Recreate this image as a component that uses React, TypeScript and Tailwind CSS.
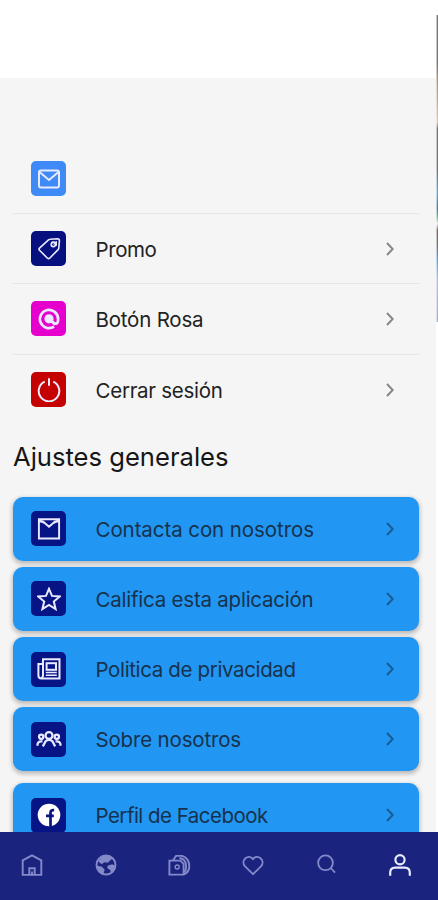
import type { ReactNode } from 'react';

interface Item {
  label: string;
  icon: ReactNode;
  color: string;
  tracking?: string;
}

function Icon({ children, size = 24, stroke = 2 }: { children: ReactNode; size?: number; stroke?: number }) {
  return (
    <svg
      width={size}
      height={size}
      viewBox="0 0 24 24"
      fill="none"
      stroke="currentColor"
      strokeWidth={stroke}
      className="shrink-0"
    >
      {children}
    </svg>
  );
}

const account: Item[] = [
  {
    label: '',
    color: 'bg-[#3e8af7]',
    icon: (
      <Icon stroke={2}>
        <rect x="2" y="3.6" width="20" height="16.8" rx="2" />
        <path d="M2.8 5.2 12 13l9.2-7.8" />
      </Icon>
    ),
  },
  {
    label: 'Promo',
    color: 'bg-[#06117f]',
    tracking: 'tracking-[-0.4px]',
    icon: (
      <Icon stroke={1.6}>
        <path d="M13.2 2.3 20.6 1.8q1.8 0 1.8 1.8l-.6 7.6q-.1.8-.7 1.4l-8.4 8.6q-1.1 1-2.2 0l-8-7.9q-1-1.1 0-2.2l9-8.2q.8-.6 1.7-.6Z" />
        <circle cx="16.3" cy="7.5" r="2.1" />
        <path d="M16.5 7.5 20 4.4M14.5 5h5v3.8" strokeWidth="1" />
      </Icon>
    ),
  },
  {
    label: 'Botón Rosa',
    color: 'bg-[#e600ce]',
    tracking: 'tracking-[-0.2px]',
    icon: (
      <Icon stroke={2.7}>
        <path d="M17 19.6A9.1 9.1 0 1 1 21.1 12.3c0 2.7-1 4.4-2.4 4.4-1 0-1.8-.7-3.4-2.2" />
        <circle cx="12" cy="11.8" r="4.6" fill="currentColor" stroke="none" />
        <path d="m13.5 13.5 4.5 4.4" strokeWidth="2.4" />
      </Icon>
    ),
  },
  {
    label: 'Cerrar sesión',
    color: 'bg-[#c50000]',
    tracking: 'tracking-[-0.27px]',
    icon: (
      <Icon stroke={2}>
        <path d="M7.8 3.7a10.3 10.3 0 1 0 8.4 0M12 .3v7.5" />
      </Icon>
    ),
  },
];

const general: Item[] = [
  {
    label: 'Contacta con nosotros',
    color: 'bg-[#071486]',
    tracking: 'tracking-[-0.08px]',
    icon: (
      <Icon stroke={1.9}>
        <path d="M1.9 2.3h20.2v19.2H1.9Z" />
        <path d="M2 4.5h4l6 5.2 6-5.2h4" />
        <path d="M2.5 3 7 6M21.5 3 17 6" />
      </Icon>
    ),
  },
  {
    label: 'Califica esta aplicación',
    color: 'bg-[#071486]',
    tracking: 'tracking-[-0.23px]',
    icon: (
      <Icon stroke={2}>
        <path d="m12 1.8 3 7.1 7.7.6-5.9 5 1.8 7.6-6.6-4.1-6.6 4.1 1.8-7.6-5.9-5L9 8.9Z" />
      </Icon>
    ),
  },
  {
    label: 'Politica de privacidad',
    color: 'bg-[#071486]',
    tracking: 'tracking-[-0.36px]',
    icon: (
      <Icon stroke={2}>
        <path d="M6 2.2h16.5v19.2H4.4q-3 0-3-3V7H6Z" />
        <path d="M6 7v11q0 3-2 3.2" />
        <rect x="9.6" y="6.2" width="9.4" height="6.6" />
        <path d="M8.8 15.5h11M8.8 18.3h11" strokeWidth="1.5" />
      </Icon>
    ),
  },
  {
    label: 'Sobre nosotros',
    color: 'bg-[#071486]',
    tracking: 'tracking-[-0.17px]',
    icon: (
      <Icon size={26} stroke={2.1}>
        <circle cx="12" cy="8.8" r="3.2" />
        <path d="M6.3 18.8 9 13.9q3-2.2 6 0l2.7 4.9" />
        <circle cx="4.8" cy="10" r="2" />
        <circle cx="19.2" cy="10" r="2" />
        <path d="M1.3 18.2c0-3 1.5-4.5 4.7-4M22.7 18.2c0-3-1.5-4.5-4.7-4" />
      </Icon>
    ),
  },
];

const facebook: Item = {
  label: 'Perfil de Facebook',
  color: 'bg-[#071486]',
  tracking: 'tracking-[-0.53px]',
  icon: (
    <Icon>
      <circle cx="12" cy="12" r="11.3" fill="white" stroke="none" />
      <path d="M13.5 23.5V9.7c0-2 1.2-2.8 3.6-2.5M9 12.8h7.8" stroke="#071486" strokeWidth="2.7" />
    </Icon>
  ),
};

function Row({ item, dark }: { item: Item; dark?: boolean }) {
  return (
    <>
      <span className={`flex size-[35px] shrink-0 items-center justify-center rounded-[5px] text-[#e9eaff] ${item.color}`}>
        {item.icon}
      </span>
      <span className={`ml-[29.5px] flex-1 whitespace-nowrap pt-0.5 text-[20.5px] leading-7 ${item.tracking ?? ''} ${dark ? 'text-[#17324d]' : 'text-[#222]'}`}>
        {item.label}
      </span>
      {item.label && (
        <svg
          width="8"
          height="14"
          viewBox="0 0 8 14"
          fill="none"
          stroke="currentColor"
          strokeWidth="1.9"
          className={dark ? 'text-[#175b91]' : 'text-[#858585]'}
        >
          <path d="m1 1 5.7 6L1 13" />
        </svg>
      )}
    </>
  );
}

function Card({ item }: { item: Item }) {
  return (
    <button className="flex h-16 w-full shrink-0 items-center rounded-[10px] bg-[#2196f3] pl-[18px] pr-[25px] text-left shadow-[0_2px_4px_1px_rgba(0,0,0,0.24)]">
      <Row item={item} dark />
    </button>
  );
}

function Nav() {
  return (
    <nav className="flex h-[68px] shrink-0 items-center justify-between bg-[#1a237e] pb-0.5 pl-5 pr-[26px] text-[#8389c9]">
      <Icon stroke={1.9}>
        <path d="M2.7 21.9V7.4L12 2.4l9.3 5v14.5Z" />
        <path d="M9.3 21.5v-6.3h5.4v6.3M12 18.5v3" />
      </Icon>
      <Icon stroke={1.9}>
        <circle cx="12" cy="12" r="9.5" />
        <path
          d="M2.5 12.6 8 13.8l2.7 3-1.5 4.6C5.3 20.9 2.3 16.8 2.5 12.6ZM8 3.6c3.4-1.8 8.8-1 11.5 2.4L17 6.5l-3.2 3.3-3.4-.5-2.8 2L4.2 8.5ZM13.5 12.8l4.8-1.6 3.4 1.7c-.5 3.2-2.2 6-4.7 7.6l-.8-3.5-2.8-1.8Z"
          fill="currentColor"
          stroke="none"
        />
      </Icon>
      <Icon stroke={1.9}>
        <path d="M5.9 7.6H2.4v14h14.2c8-3.2 7.6-15.5-1.5-18.7H9L5.9 7.6h7.5l3.2 3.2v10.8" />
        <path d="M12.5 5c8.3 1.3 7.5 11.8 4.3 14.2" />
        <circle cx="10.2" cy="14" r="2" strokeWidth="1.4" />
      </Icon>
      <Icon stroke={1.8}>
        <path d="M12 21.2 3.8 13.1C-.8 7.3 7.5.2 12 6.1c4.5-5.9 12.8 1.2 8.2 7Z" />
      </Icon>
      <Icon stroke={1.8}>
        <circle cx="11.5" cy="9.8" r="7.4" />
        <path d="m16.7 15 4.4 4.7" />
      </Icon>
      <span className="text-[#e8eaff]">
        <Icon stroke={2.2}>
          <circle cx="12" cy="6.8" r="4.6" />
          <path d="M2.2 22.7v-3q0-5 5-5h9.6q5 0 5 5v3" />
        </Icon>
      </span>
    </nav>
  );
}

export default function App() {
  return (
    <div className="flex h-[900px] w-[438px] flex-col overflow-hidden bg-white font-['Inter','Liberation_Sans',sans-serif]">
      <div className="flex min-h-0 flex-1">
        <main className="flex w-[436px] shrink-0 flex-col overflow-hidden">
          <header className="h-[78px] shrink-0 bg-white" />
          <div className="flex-1 bg-[#f5f5f5] px-[13px] pt-[66px]">
            <ul className="mr-1">
              {account.map((item, i) => (
                <li
                  key={i}
                  className={`flex h-[70.2px] items-center border-[#e7e7e7] pl-[18px] pr-[25px] ${i < 3 ? 'border-b' : ''}`}
                >
                  <Row item={item} />
                </li>
              ))}
            </ul>
            <h2 className="mt-[15.2px] h-[34px] whitespace-nowrap text-[25.6px] leading-[34px] text-[#161616]">
              Ajustes generales
            </h2>
            <div className="mr-1 mt-[22.6px] flex flex-col gap-[6.3px]">
              {general.map((item) => (
                <Card key={item.label} item={item} />
              ))}
            </div>
            <div className="mr-1 mt-[11.8px]">
              <Card item={facebook} />
            </div>
          </div>
        </main>
        {/* edge of the cover behind the page */}
        <div className="mt-[15px] h-[307px] w-0.5 border-l border-white/60 bg-[linear-gradient(#777_0%,#777_16%,#a09080_20%,#d8c8b5_35%,#777_37%,#777_50%,#6fa3c4_58%,#5b7c90_63%,#79b89d_66%,#eee_68%,#776a68_70%,#7a7476_75%,#6d9fc9_80%,#b5bdd4_86%,#aaaec5_100%)]" />
      </div>
      <Nav />
    </div>
  );
}
